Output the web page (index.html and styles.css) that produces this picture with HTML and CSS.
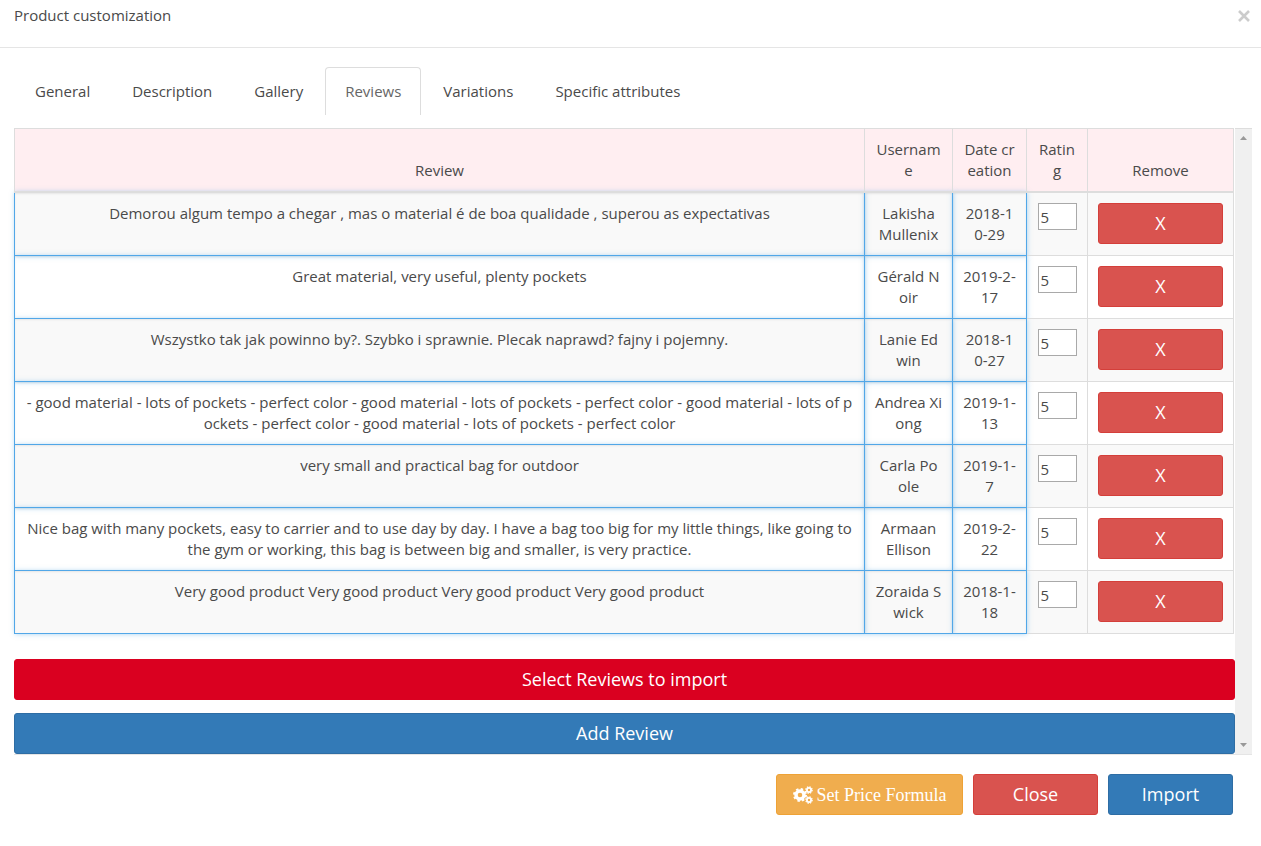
FILE: index.html
```html
<!DOCTYPE html>
<html lang="en">
<head>
<meta charset="utf-8">
<title>Product customization</title>
<link rel="stylesheet" href="styles.css">
</head>
<body>
<header class="modal-header">
  <h1 class="modal-title">Product customization</h1>
  <button class="dismiss" type="button" aria-label="Dismiss"><svg width="12" height="12" viewBox="0 0 12 12" aria-hidden="true"><path d="M1 1l10 10M11 1L1 11" stroke="#ccc" stroke-width="2.6"/></svg></button>
</header>
<main class="modal-body">
  <nav class="tabs">
    <a class="tab" href="#general">General</a>
    <a class="tab" href="#description">Description</a>
    <a class="tab" href="#gallery">Gallery</a>
    <a class="tab active" href="#reviews">Reviews</a>
    <a class="tab" href="#variations">Variations</a>
    <a class="tab" href="#attributes">Specific attributes</a>
  </nav>
  <section class="pane">
    <div class="pane-content">
      <table class="reviews">
        <colgroup><col><col class="col-user"><col class="col-date"><col class="col-rating"><col class="col-remove"></colgroup>
        <thead>
          <tr><th>Review</th><th>Usernam<br>e</th><th>Date cr<br>eation</th><th>Ratin<br>g</th><th>Remove</th></tr>
        </thead>
        <tbody>
          <tr><td class="editable">Demorou algum tempo a chegar , mas o material é de boa qualidade , superou as expectativas</td><td class="editable">Lakisha<br>Mullenix</td><td class="editable">2018-1<br>0-29</td><td><input class="rating" type="text" value="5" aria-label="Rating"></td><td><button class="btn danger" type="button">X</button></td></tr>
          <tr><td class="editable">Great material, very useful, plenty pockets</td><td class="editable">Gérald N<br>oir</td><td class="editable">2019-2-<br>17</td><td><input class="rating" type="text" value="5" aria-label="Rating"></td><td><button class="btn danger" type="button">X</button></td></tr>
          <tr><td class="editable">Wszystko tak jak powinno by?. Szybko i sprawnie. Plecak naprawd? fajny i pojemny.</td><td class="editable">Lanie Ed<br>win</td><td class="editable">2018-1<br>0-27</td><td><input class="rating" type="text" value="5" aria-label="Rating"></td><td><button class="btn danger" type="button">X</button></td></tr>
          <tr><td class="editable">- good material - lots of pockets - perfect color - good material - lots of pockets - perfect color - good material - lots of p<br>ockets - perfect color - good material - lots of pockets - perfect color</td><td class="editable">Andrea Xi<br>ong</td><td class="editable">2019-1-<br>13</td><td><input class="rating" type="text" value="5" aria-label="Rating"></td><td><button class="btn danger" type="button">X</button></td></tr>
          <tr><td class="editable">very small and practical bag for outdoor</td><td class="editable">Carla Po<br>ole</td><td class="editable">2019-1-<br>7</td><td><input class="rating" type="text" value="5" aria-label="Rating"></td><td><button class="btn danger" type="button">X</button></td></tr>
          <tr><td class="editable">Nice bag with many pockets, easy to carrier and to use day by day. I have a bag too big for my little things, like going to<br>the gym or working, this bag is between big and smaller, is very practice.</td><td class="editable">Armaan<br>Ellison</td><td class="editable">2019-2-<br>22</td><td><input class="rating" type="text" value="5" aria-label="Rating"></td><td><button class="btn danger" type="button">X</button></td></tr>
          <tr><td class="editable">Very good product Very good product Very good product Very good product</td><td class="editable">Zoraida S<br>wick</td><td class="editable">2018-1-<br>18</td><td><input class="rating" type="text" value="5" aria-label="Rating"></td><td><button class="btn danger" type="button">X</button></td></tr>
        </tbody>
      </table>
      <div class="actions">
        <button class="btn select" type="button">Select Reviews to import</button>
        <button class="btn primary" type="button">Add Review</button>
      </div>
    </div>
    <div class="scrollbar" aria-hidden="true">
      <svg width="7" height="4" viewBox="0 0 7 4"><path d="M0 4L3.5 0 7 4z" fill="#999"/></svg>
      <svg width="7" height="4" viewBox="0 0 7 4"><path d="M0 0h7L3.5 4z" fill="#999"/></svg>
    </div>
  </section>
</main>
<footer class="modal-footer">
  <button class="btn warning" type="button"><svg width="20" height="18" viewBox="0 0 20 18" aria-hidden="true">
    <g fill="none" stroke="#fff">
      <circle cx="7" cy="9" r="4" stroke-width="3.4"/>
      <circle cx="7" cy="9" r="6" stroke-width="2" stroke-dasharray="2.4 2.312"/>
      <circle cx="16" cy="4" r="2.1" stroke-width="1.8"/>
      <circle cx="16" cy="4" r="3.2" stroke-width="1.2" stroke-dasharray="1.4 1.113"/>
      <circle cx="16" cy="14" r="2.1" stroke-width="1.8"/>
      <circle cx="16" cy="14" r="3.2" stroke-width="1.2" stroke-dasharray="1.4 1.113"/>
    </g></svg><span>Set Price Formula</span></button>
  <button class="btn danger" type="button">Close</button>
  <button class="btn primary" type="button">Import</button>
</footer>
</body>
</html>
```

FILE: styles.css
```css
* { box-sizing: border-box; }
body {
  margin: 0;
  background: #fff;
  color: #4a4a4a;
  font: 400 15px/21px "Open Sans", sans-serif;
}
.modal-header {
  display: flex;
  justify-content: space-between;
  align-items: flex-start;
  height: 48px;
  padding: 5px 11px 0 14px;
  border-bottom: 1px solid #e5e5e5;
}
.modal-title { margin: 0; font: inherit; }
.dismiss {
  display: flex;
  align-items: center;
  height: 21px;
  padding: 0;
  border: 0;
  background: none;
}
.modal-body { padding: 19px 9px 0 14px; }
.tabs { display: flex; gap: 2px; padding-left: 1px; }
.tab {
  height: 48px;
  padding: 13px 19px 0;
  border: 1px solid transparent;
  border-bottom: 0;
  border-radius: 4px 4px 0 0;
  color: #4a4a4a;
  text-decoration: none;
}
.tab.active { border-color: #ddd; color: #666; }
.pane {
  display: flex;
  margin-top: 13px;
  border-bottom: 1px solid #e5e5e5;
}
.pane-content { flex: 1; min-width: 0; }
.scrollbar {
  display: flex;
  flex-direction: column;
  justify-content: space-between;
  align-items: center;
  width: 17px;
  padding: 7px 0;
  border-top: 1px solid #ddd;
  background: #f0f0f0;
}
.reviews {
  width: calc(100% - 1px);
  table-layout: fixed;
  border-collapse: collapse;
  text-align: center;
}
.col-user { width: 88px; }
.col-date { width: 74px; }
.col-rating { width: 61px; }
.col-remove { width: 146px; }
.reviews th, .reviews td {
  padding: 10px 0;
  border: 1px solid #ddd;
  vertical-align: top;
  white-space: nowrap;
}
.reviews th {
  border-bottom-width: 2px;
  background: #ffeef1;
  font-weight: 400;
  vertical-align: bottom;
}
.reviews td { height: 63px; }
.reviews tbody tr:nth-child(odd) { background: #f9f9f9; }
.reviews td.editable {
  border-color: #51a7e8;
  box-shadow: inset 0 1px 2px rgba(0, 0, 0, 0.075), 0 0 5px rgba(81, 167, 232, 0.5);
}
.reviews td .btn { display: block; margin: 0 auto; }
.rating {
  display: block;
  width: 39px;
  height: 27px;
  margin: 0 auto;
  padding: 1px 2px;
  border: 1px solid #a9a9a9;
  background: #fff;
  color: #4a4a4a;
  font: inherit;
}
.btn {
  width: 125px;
  height: 41px;
  padding: 0 0 2px;
  border: 1px solid;
  border-radius: 3px;
  color: #fff;
  font: 400 18px/24px "Open Sans", sans-serif;
}
.danger { border-color: #d43f3a; background: #d9534f; }
.primary { border-color: #2e6da4; background: #337ab7; }
.select { border-color: #da0020; background: #da0020; }
.warning {
  display: flex;
  justify-content: center;
  align-items: center;
  gap: 4px;
  width: 187px;
  padding: 0;
  border-color: #eea236;
  background: #f0ad4e;
  font-family: "Liberation Serif", serif;
}
.actions {
  display: flex;
  flex-direction: column;
  gap: 13px;
  margin-top: 25px;
}
.actions .btn { width: 100%; }
.modal-footer {
  display: flex;
  justify-content: flex-end;
  gap: 10px;
  padding: 19px 28px 31px;
}
```
